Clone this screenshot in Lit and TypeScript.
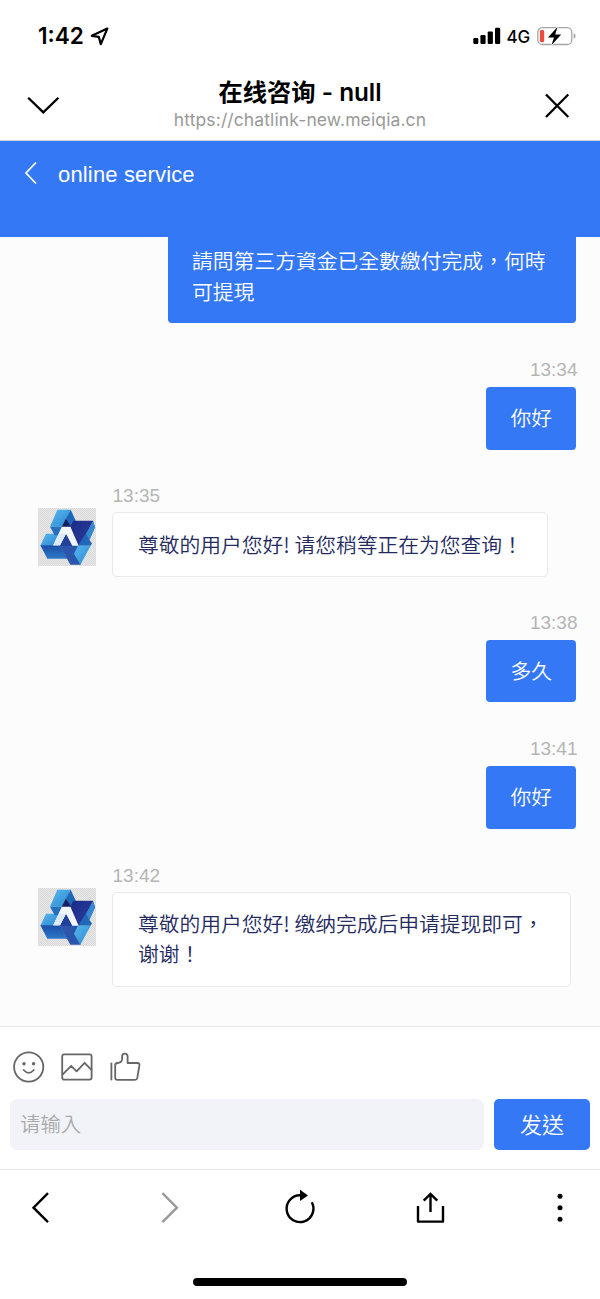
import { LitElement, html, css, nothing } from "lit";
import { customElement, property } from "lit/decorators.js";

interface Message {
  from: "me" | "agent";
  time?: string;
  text: string;
}

const MESSAGES: Message[] = [
  { from: "me", text: "請問第三方資金已全數繳付完成，何時可提現" },
  { from: "me", time: "13:34", text: "你好" },
  { from: "agent", time: "13:35", text: "尊敬的用户您好! 请您稍等正在为您查询！" },
  { from: "me", time: "13:38", text: "多久" },
  { from: "me", time: "13:41", text: "你好" },
  { from: "agent", time: "13:42", text: "尊敬的用户您好! 缴纳完成后申请提现即可，谢谢！" },
];

@customElement("status-bar")
class StatusBar extends LitElement {
  static styles = css`
    :host {
      display: flex;
      height: 72px;
      box-sizing: border-box;
      padding: 0 24px 0 38px;
      align-items: center;
      font-family: Inter, sans-serif;
      color: #000;
    }
    .time { font-size: 22.6px; font-weight: 600; line-height: 28px; }
    .arrow { margin-left: 6px; }
    .signal { margin-left: auto; }
    .net { font-size: 17px; font-weight: 500; margin: 1px 7px 0 6px; line-height: 22px; letter-spacing: -0.2px; }
    svg { display: block; flex: none; }
  `;
  render() {
    return html`
      <span class="time">1:42</span>
      <svg class="arrow" width="19" height="19" viewBox="0 0 19 19">
        <path d="M17.3 1.6 L1.8 8.8 L8.8 9.9 L10.8 17.2 Z" fill="none" stroke="#000" stroke-width="2.2" stroke-linejoin="round" />
      </svg>
      <svg class="signal" width="28" height="18" viewBox="0 0 28 18">
        <rect x="0.3" y="11" width="5" height="6" rx="1.2" />
        <rect x="7.4" y="8" width="5.2" height="9" rx="1.2" />
        <rect x="14.7" y="4.4" width="5.2" height="12.6" rx="1.2" />
        <rect x="22" y="0.7" width="5.2" height="16.3" rx="1.2" />
      </svg>
      <span class="net">4G</span>
      <svg width="39" height="20" viewBox="0 0 39 20">
        <rect x="0.8" y="1.7" width="34" height="16.8" rx="4.6" fill="none" stroke="#a5a5a5" stroke-width="1.3" />
        <path d="M36.7 7.2 Q38.6 8 38.6 10 Q38.6 12 36.7 12.8 Z" fill="#a5a5a5" />
        <rect x="2.9" y="4" width="4.3" height="12.2" rx="1.4" fill="#eb4b3d" />
        <path d="M20.6 0.8 L11 11.4 H17 L14.4 19.2 L24.2 8.4 H18.2 Z" fill="#000" stroke="#fff" stroke-width="1.6" paint-order="stroke" />
      </svg>
    `;
  }
}

@customElement("page-bar")
class PageBar extends LitElement {
  static styles = css`
    :host {
      display: flex;
      height: 69px;
      box-sizing: border-box;
      padding: 0 30px 0 27px;
      border-bottom: 1px solid #cfd3dc;
      justify-content: space-between;
      color: #000;
    }
    svg { display: block; margin-top: 20px; }
    .center { text-align: center; margin-left: -5px; }
    .title {
      font: 600 24.3px/28px Inter, "Noto Sans CJK SC", sans-serif;
      margin-top: 6px;
    }
    .url { font: 400 17.5px/22px Inter, sans-serif; letter-spacing: 0.12px; color: #999; margin-top: 3px; }
  `;
  render() {
    return html`
      <svg width="33" height="28" viewBox="0 0 33 28">
        <path d="M1.2 5.7 L16.3 20.4 L31.4 5.7" fill="none" stroke="#000" stroke-width="2.3" />
      </svg>
      <div class="center">
        <div class="title">在线咨询 - null</div>
        <div class="url">https://chatlink-new.meiqia.cn</div>
      </div>
      <svg width="25" height="28" viewBox="0 0 25 28">
        <path d="M1 2.5 L23.3 25 M23.3 2.5 L1 25" fill="none" stroke="#000" stroke-width="2.3" />
      </svg>
    `;
  }
}

@customElement("agent-avatar")
class AgentAvatar extends LitElement {
  static styles = css`
    :host { display: block; flex: none; width: 58px; height: 58px; }
    svg { display: block; }
  `;
  render() {
    return html`
      <svg width="58" height="58" viewBox="0 0 174 174">
        <defs>
          <pattern id="check" width="6" height="6" patternUnits="userSpaceOnUse">
            <rect width="6" height="6" fill="#e8e8e8" />
            <rect width="3" height="3" fill="#d9d9d9" />
            <rect x="3" y="3" width="3" height="3" fill="#d9d9d9" />
          </pattern>
          <linearGradient id="sky" x1="0" y1="0" x2="1" y2="1">
            <stop offset="0" stop-color="#58b8ee" />
            <stop offset="1" stop-color="#2b88d2" />
          </linearGradient>
          <linearGradient id="navy" x1="0" y1="0" x2="1" y2="1">
            <stop offset="0" stop-color="#1c2a86" />
            <stop offset="1" stop-color="#2a3e9e" />
          </linearGradient>
          <linearGradient id="deep" x1="0" y1="0" x2="0" y2="1">
            <stop offset="0" stop-color="#1a4fa6" />
            <stop offset="1" stop-color="#2f78c9" />
          </linearGradient>
        </defs>
        <rect width="174" height="174" fill="url(#check)" />
        <path d="M58 5 H98 L72 56 H36 Z" fill="url(#sky)" />
        <path d="M98 5 L115 42 L99 58 L84 31 Z" fill="#1d67b8" />
        <path d="M84 31 L100 57 H71 Z" fill="#141f66" />
        <path d="M106 38 H166 L145 78 L124 113 H119 L97 57 Z" fill="url(#navy)" />
        <path d="M166 42 L171 58 L154 96 L162 106 L158 113 H120 L146 73 Z" fill="#2067b8" />
        <path d="M166 40 L171 58 L154 96 L144 77 Z" fill="#3587d0" />
        <path d="M24 77 H62 L45 113 H7 Z" fill="url(#sky)" />
        <path d="M36 56 H72 L60 82 H50 Z" fill="#256fbf" />
        <path d="M7 112 H66 L88 152 H28 Z" fill="url(#deep)" />
        <path d="M84 77 L120 113 L128 170 H97 L65 112 Z" fill="#2b56ac" />
        <path d="M120 113 H158 L127 170 L108 137 Z" fill="url(#sky)" />
        <path d="M84 77 L104 113 H66 Z" fill="#21409a" />
        <path d="M72 56 H97 L122 113 H103 L84 77 L66 112 H46 Z" fill="#f1f5fc" />
        <path d="M84 77 L66 112 H46 L62 78 Z" fill="#dce9f8" />
      </svg>
    `;
  }
}

@customElement("chat-message")
class ChatMessage extends LitElement {
  @property({ attribute: false }) message!: Message;
  static styles = css`
    :host { display: block; height: 126.4px; flex: none; }
    .row { display: flex; gap: 16px; padding: 0 24px 0 38px; }
    .row.me { justify-content: flex-end; }
    .avatar { margin-top: 22px; }
    .column { display: flex; flex-direction: column; align-items: flex-start; }
    .me .column { align-items: flex-end; }
    .time {
      font: 400 19px/20px "Liberation Sans", Arial, sans-serif;
      color: #b5b5b5;
      margin-left: 0.5px;
      margin-right: -1.5px;
      margin-bottom: 6px;
    }
    .me .time { margin-bottom: 7px; }
    .bubble {
      box-sizing: border-box;
      font: 350 20.8px/30.5px "Noto Sans CJK TC", "Noto Sans CJK SC", sans-serif;
      border-radius: 4px;
    }
    .me .bubble {
      max-width: 408px;
      padding: 15px 24px 17px;
      background: #3478f6;
      color: #fff;
    }
    .agent .bubble {
      max-width: 459px;
      padding: 15.3px 24.5px 16.7px 25px;
      border: 1px solid #eaeaec;
      border-radius: 5px;
      background: #fff;
      color: #242a60;
      letter-spacing: -0.04px;
    }
  `;
  render() {
    const m = this.message;
    return html`
      <div class="row ${m.from}">
        ${m.from === "agent" ? html`<agent-avatar class="avatar"></agent-avatar>` : nothing}
        <div class="column">
          ${m.time ? html`<div class="time">${m.time}</div>` : nothing}
          <div class="bubble">${m.text}</div>
        </div>
      </div>
    `;
  }
}

@customElement("chat-composer")
class ChatComposer extends LitElement {
  static styles = css`
    :host {
      display: block;
      height: 143px;
      box-sizing: border-box;
      border-top: 1px solid #e6e6e6;
      background: #fff;
      padding: 24px 10px 0;
      font-family: "Noto Sans CJK TC", "Noto Sans CJK SC", sans-serif;
      font-weight: 350;
    }
    .tools { display: flex; gap: 16px; height: 32px; padding-left: 3px; }
    .tools svg { display: block; fill: none; stroke: #666; stroke-width: 1.8; stroke-linejoin: round; stroke-linecap: round; }
    .tools .dot { fill: #666; stroke: none; }
    .entry { display: flex; gap: 10px; margin-top: 16px; height: 51px; }
    .input {
      flex: 1;
      border-radius: 7px;
      background: #f2f3f8;
      color: #aaa;
      padding-left: 10px;
      font-size: 20.4px;
      line-height: 49px;
    }
    .send {
      width: 96px;
      border-radius: 5px;
      background: #3478f6;
      color: #fff;
      text-align: center;
      font-size: 22px;
      line-height: 49px;
    }
  `;
  render() {
    return html`
      <div class="tools">
        <svg width="32" height="32" viewBox="0 0 32 32">
          <circle cx="15.7" cy="16" r="14.6" />
          <circle class="dot" cx="11" cy="12.8" r="1.7" />
          <circle class="dot" cx="20.6" cy="12.8" r="1.7" />
          <path d="M10.7 19 Q15.7 24.8 20.8 19" />
        </svg>
        <svg width="32" height="32" viewBox="0 0 32 32">
          <rect x="1.2" y="3.4" width="29.4" height="25.2" rx="2" />
          <path d="M1.5 23.7 L10.2 14.8 L15.6 20.3 L23.6 11.8 L30.4 18.8" />
        </svg>
        <svg width="32" height="32" viewBox="0 0 32 32">
          <path d="M2.4 12.5 V28.6" />
          <path d="M8.4 12 Q6.2 12.2 6.2 14.2 V26.4 Q6.2 28.8 8.4 28.8 H26 Q27.9 28.8 28.3 26.9 L30.4 14.4 Q30.7 12 28.4 12 H18.6 V5.4 Q18.4 2.6 15.8 2.7 Q13.2 2.8 13.1 5.5 V8.4 Q12.6 11.8 8.4 12 Z" />
        </svg>
      </div>
      <div class="entry">
        <div class="input">请输入</div>
        <div class="send">发送</div>
      </div>
    `;
  }
}

@customElement("browser-toolbar")
class BrowserToolbar extends LitElement {
  static styles = css`
    :host {
      display: flex;
      flex-direction: column;
      align-items: center;
      height: 130px;
      box-sizing: border-box;
      border-top: 1px solid #e6e6e6;
      background: #fff;
    }
    .icons { display: flex; width: 560px; justify-content: space-between; margin-top: 18px; }
    svg { display: block; fill: none; stroke: #000; stroke-width: 2.4; }
    .muted { stroke: #999; }
    .solid { fill: #000; stroke: none; }
    .home { width: 214px; height: 8px; border-radius: 4px; background: #000; margin-top: 50px; }
  `;
  render() {
    return html`
      <div class="icons">
        <svg width="40" height="40" viewBox="0 0 40 40"><path d="M28 5.2 L13.5 19.7 L28 34.2" /></svg>
        <svg class="muted" width="40" height="40" viewBox="0 0 40 40"><path d="M12.4 5.2 L26.9 19.7 L12.4 34.2" /></svg>
        <svg width="40" height="40" viewBox="0 0 40 40">
          <path d="M20 7.3 A13.4 13.4 0 1 0 31.8 14.3" />
          <path class="solid" d="M20 1.8 L28 7.6 L20 13 Z" />
        </svg>
        <svg width="40" height="40" viewBox="0 0 40 40">
          <path d="M8 18 V33.6 H33 V18" stroke-linejoin="round" />
          <path d="M20.5 24 V6.3 M13.7 12.7 L20.5 5.9 L27.3 12.7" />
        </svg>
        <svg class="solid" width="40" height="40" viewBox="0 0 40 40">
          <circle cx="20" cy="8.3" r="2.5" /><circle cx="20" cy="19.8" r="2.5" /><circle cx="20" cy="31.3" r="2.5" />
        </svg>
      </div>
      <div class="home"></div>
    `;
  }
}

@customElement("app-root")
class AppRoot extends LitElement {
  static styles = css`
    :host {
      display: flex;
      flex-direction: column;
      width: 600px;
      height: 1299px;
      overflow: hidden;
      background: #fff;
    }
    .header {
      display: flex;
      height: 96px;
      flex: none;
      box-sizing: border-box;
      padding: 20px 24px 0;
      gap: 21px;
      background: #3478f6;
      color: #fff;
      font: 400 22px/28px "Liberation Sans", Arial, sans-serif;
      letter-spacing: 0.16px;
    }
    .header svg { display: block; }
    .chat {
      display: flex;
      flex-direction: column;
      justify-content: flex-end;
      height: 789px;
      flex: none;
      box-sizing: border-box;
      overflow: hidden;
      background: #fcfcfc;
      padding-bottom: 34px;
    }
    .chat .first { height: 130px; }
  `;
  render() {
    return html`
      <status-bar></status-bar>
      <page-bar></page-bar>
      <div class="header">
        <svg width="13" height="24" viewBox="0 0 13 24">
          <path d="M12 1.5 L2 12 L12 22.5" fill="none" stroke="#fff" stroke-width="1.8" />
        </svg>
        <span>online service</span>
      </div>
      <div class="chat">
        ${MESSAGES.map(
          (m, i) => html`<chat-message class=${i === 0 ? "first" : ""} .message=${m}></chat-message>`
        )}
      </div>
      <chat-composer></chat-composer>
      <browser-toolbar></browser-toolbar>
    `;
  }
}
